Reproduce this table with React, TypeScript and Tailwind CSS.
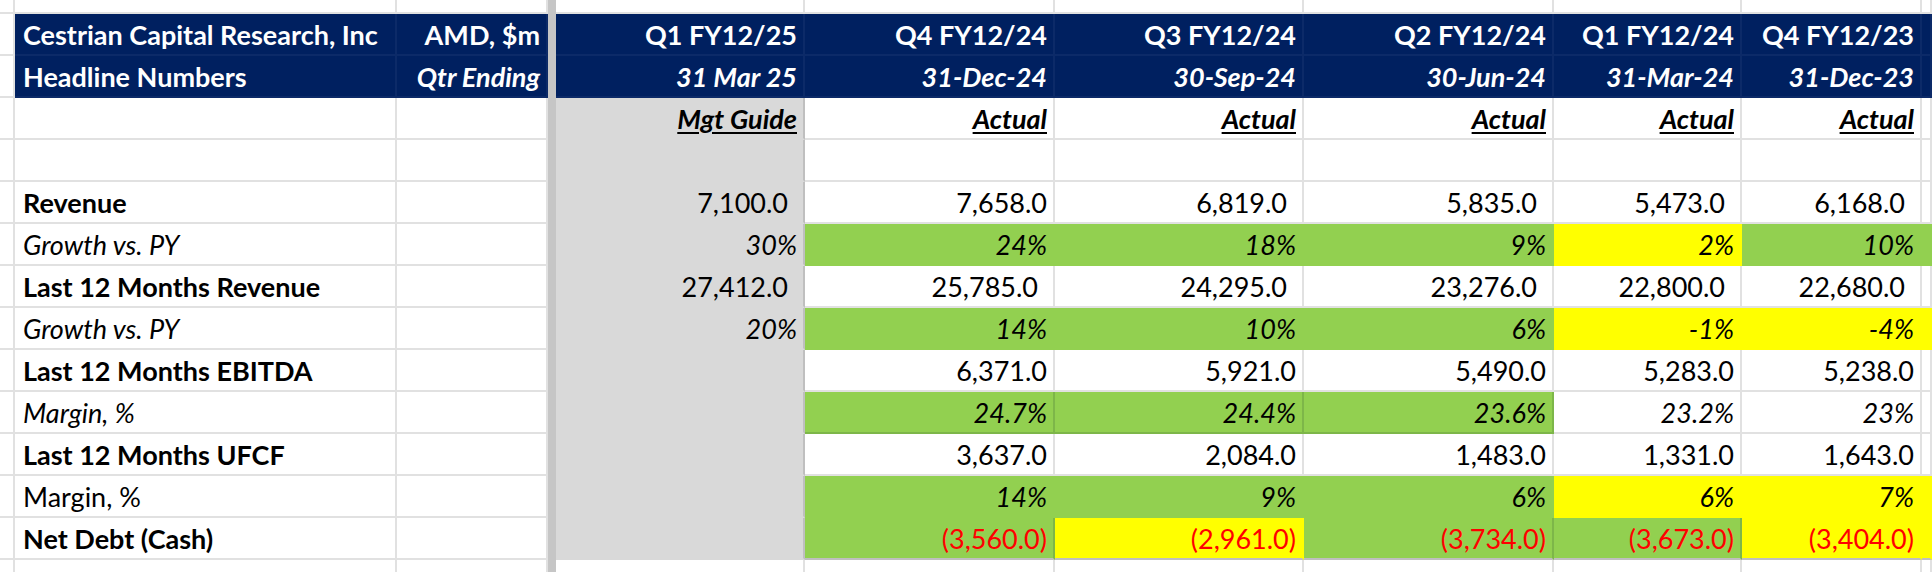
import React from "react"

type Fill = "w" | "c" | "g" | "gb" | "y" | "b"

// column widths: left stub, A, B, frozen divider, C..H, I (partial)
const W = [
  "w-[15px]",
  "w-[382px]",
  "w-[151px]",
  "w-[8px]",
  "w-[249px]",
  "w-[250px]",
  "w-[249px]",
  "w-[250px]",
  "w-[188px]",
  "w-[180px]",
  "flex-1",
]

const FILL: Record<Fill, string> = {
  w: "bg-white border-[#e1e1e1]",
  c: "bg-[#d9d9d9] border-b-[#d9d9d9] border-r-[#bfbfbf]",
  g: "bg-[#92d050] border-[#92d050]",
  gb: "bg-[#92d050] border-[#7db649]",
  y: "bg-[#ffff00] border-[#ffff00]",
  b: "bg-[#002060] border-[#0c2a68] text-white",
}

const base = "shrink-0 h-full border-r-2 border-b-2 flex items-end leading-[38px] whitespace-nowrap overflow-hidden"

function Cell({
  col,
  fill = "w",
  right = false,
  pad = false,
  className = "",
  children,
}: {
  col: number
  fill?: Fill
  right?: boolean
  pad?: boolean
  className?: string
  children?: React.ReactNode
}) {
  const align = right ? (pad ? "justify-end pr-[15px]" : "justify-end pr-[6px]") : "justify-start pl-[8px]"
  return <div className={`${base} ${W[col]} ${FILL[fill]} ${align} ${className}`}>{children}</div>
}

function Divider() {
  return <div className="shrink-0 h-full w-[8px] bg-[#c6c6c6]" />
}

type Row = {
  label: string
  labelCls: string
  vals: string[]
  fills: Fill[]
  valCls: string
  pad?: boolean[]
  cBottom?: string
  iFill?: Fill
  bottom?: string
}

const rows: Row[] = [
  {
    label: "Revenue",
    labelCls: "font-bold",
    vals: ["7,100.0", "7,658.0", "6,819.0", "5,835.0", "5,473.0", "6,168.0"],
    fills: ["c", "w", "w", "w", "w", "w"],
    valCls: "",
    pad: [true, false, true, true, true, true],
  },
  {
    label: "Growth vs. PY",
    labelCls: "italic",
    vals: ["30%", "24%", "18%", "9%", "2%", "10%"],
    fills: ["c", "g", "g", "g", "y", "g"],
    valCls: "italic",
    iFill: "g",
  },
  {
    label: "Last 12 Months Revenue",
    labelCls: "font-bold",
    vals: ["27,412.0", "25,785.0", "24,295.0", "23,276.0", "22,800.0", "22,680.0"],
    fills: ["c", "w", "w", "w", "w", "w"],
    valCls: "",
    pad: [true, true, true, true, true, true],
  },
  {
    label: "Growth vs. PY",
    labelCls: "italic",
    vals: ["20%", "14%", "10%", "6%", "-1%", "-4%"],
    fills: ["c", "g", "g", "g", "y", "y"],
    valCls: "italic",
    iFill: "y",
  },
  {
    label: "Last 12 Months EBITDA",
    labelCls: "font-bold",
    vals: ["", "6,371.0", "5,921.0", "5,490.0", "5,283.0", "5,238.0"],
    fills: ["c", "w", "w", "w", "w", "w"],
    valCls: "",
    cBottom: "border-b-[#bfbfbf]",
  },
  {
    label: "Margin, %",
    labelCls: "italic",
    vals: ["", "24.7%", "24.4%", "23.6%", "23.2%", "23%"],
    fills: ["c", "gb", "gb", "gb", "w", "w"],
    valCls: "italic",
    cBottom: "border-b-[#bfbfbf]",
  },
  {
    label: "Last 12 Months UFCF",
    labelCls: "font-bold",
    vals: ["", "3,637.0", "2,084.0", "1,483.0", "1,331.0", "1,643.0"],
    fills: ["c", "w", "w", "w", "w", "w"],
    valCls: "",
  },
  {
    label: "Margin, %",
    labelCls: "",
    vals: ["", "14%", "9%", "6%", "6%", "7%"],
    fills: ["c", "g", "g", "g", "y", "y"],
    valCls: "italic",
    iFill: "y",
  },
  {
    label: "Net Debt (Cash)",
    labelCls: "font-bold",
    vals: ["", "(3,560.0)", "(2,961.0)", "(3,734.0)", "(3,673.0)", "(3,404.0)"],
    fills: ["c", "gb", "y", "gb", "gb", "y"],
    valCls: "text-[#ff0000]",
    cBottom: "border-b-[#bfbfbf]",
    iFill: "y",
    bottom: "border-b-[#bfbfbf]",
  },
]

const quarters = ["Q1 FY12/25", "Q4 FY12/24", "Q3 FY12/24", "Q2 FY12/24", "Q1 FY12/24", "Q4 FY12/23"]
const dates = ["31 Mar 25", "31-Dec-24", "30-Sep-24", "30-Jun-24", "31-Mar-24", "31-Dec-23"]
const basis = ["Mgt Guide", "Actual", "Actual", "Actual", "Actual", "Actual"]

function EmptyRow({ h }: { h: string }) {
  return (
    <div className={`flex ${h}`}>
      <Cell col={0} />
      <Cell col={1} />
      <Cell col={2} />
      <Divider />
      {[4, 5, 6, 7, 8, 9].map((c) => (
        <Cell key={c} col={c} />
      ))}
      <Cell col={10} />
    </div>
  )
}

export default function App() {
  return (
    <div className="h-[572px] w-[1932px] overflow-hidden bg-white font-['Lato',sans-serif] text-[27px] text-black">
      {/* partial row above the header */}
      <EmptyRow h="h-[14px]" />

      {/* header line 1 */}
      <div className="flex h-[42px]">
        <Cell col={0} />
        <Cell col={1} fill="b" className="font-bold">
          Cestrian Capital Research, Inc
        </Cell>
        <Cell col={2} fill="b" right className="font-bold">
          AMD, $m
        </Cell>
        <Divider />
        {quarters.map((q, i) => (
          <Cell key={q + i} col={i + 4} fill="b" right className="font-bold">
            {q}
          </Cell>
        ))}
        <Cell col={10} fill="b" />
      </div>

      {/* header line 2 */}
      <div className="flex h-[42px]">
        <Cell col={0} />
        <Cell col={1} fill="b" className="font-bold">
          Headline Numbers
        </Cell>
        <Cell col={2} fill="b" right className="font-bold italic">
          Qtr Ending
        </Cell>
        <Divider />
        {dates.map((d, i) => (
          <Cell key={d} col={i + 4} fill="b" right className="font-bold italic">
            {d}
          </Cell>
        ))}
        <Cell col={10} fill="b" />
      </div>

      {/* basis row */}
      <div className="flex h-[42px]">
        <Cell col={0} />
        <Cell col={1} />
        <Cell col={2} />
        <Divider />
        {basis.map((b, i) => (
          <Cell
            key={i}
            col={i + 4}
            fill={i === 0 ? "c" : "w"}
            right
            className={i === 0 ? "border-b-[#c8c8c8]" : ""}
          >
            <span className="font-bold italic underline decoration-[2px] underline-offset-[3px]">{b}</span>
          </Cell>
        ))}
        <Cell col={10} />
      </div>

      {/* blank row */}
      <div className="flex h-[42px]">
        <Cell col={0} />
        <Cell col={1} />
        <Cell col={2} />
        <Divider />
        <Cell col={4} fill="c" className="border-b-[#c8c8c8]" />
        {[5, 6, 7, 8, 9].map((c) => (
          <Cell key={c} col={c} />
        ))}
        <Cell col={10} />
      </div>

      {rows.map((r, ri) => (
        <div key={ri} className="flex h-[42px]">
          <Cell col={0} />
          <Cell col={1} className={r.labelCls}>
            {r.label}
          </Cell>
          <Cell col={2} />
          <Divider />
          {r.vals.map((v, i) => (
            <Cell
              key={i}
              col={i + 4}
              fill={r.fills[i]}
              right
              pad={r.pad ? r.pad[i] : false}
              className={`${r.valCls} ${i === 0 && r.cBottom ? r.cBottom : ""} ${i > 0 && r.bottom ? r.bottom : ""}`}
            >
              {v}
            </Cell>
          ))}
          <Cell col={10} fill={r.iFill ?? "w"} className={r.bottom ?? ""} />
        </div>
      ))}

      {/* partial row below */}
      <EmptyRow h="h-[20px]" />
    </div>
  )
}
